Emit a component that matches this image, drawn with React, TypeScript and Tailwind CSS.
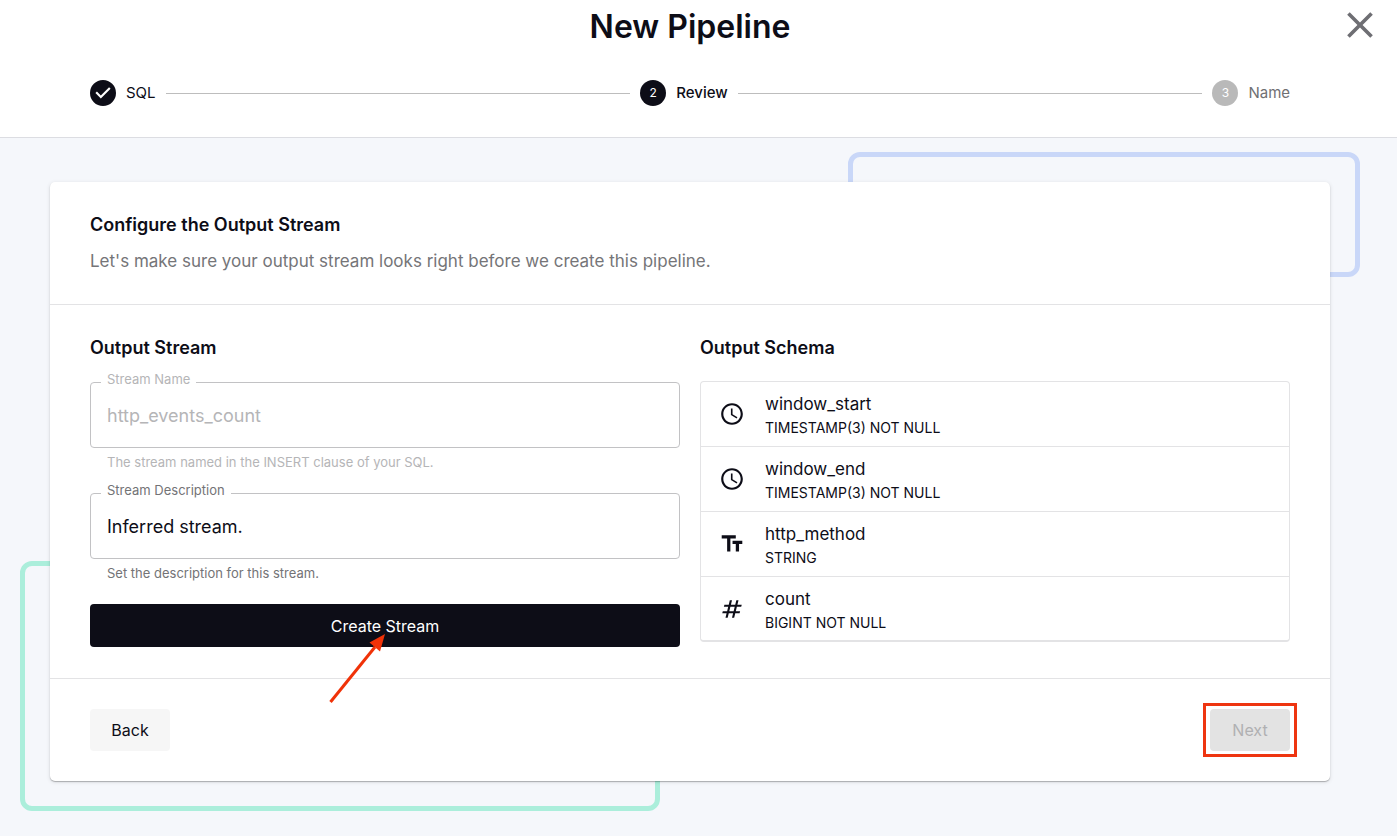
import React from 'react';
import type { IconType } from 'react-icons';
import { MdAccessTime, MdClose, MdNumbers, MdTextFields } from 'react-icons/md';

interface StepProps {
  number: number;
  label: string;
  state: 'done' | 'active' | 'pending';
}

const Step = ({ number, label, state }: StepProps) => {
  const pending = state === 'pending';

  return (
    <li className="flex items-center gap-[10px]" aria-current={state === 'active' ? 'step' : undefined}>
      {state === 'done' ? (
        <svg viewBox="0 0 24 24" className="size-[26px] fill-[#0d0d17]" aria-hidden="true">
          <path d="M12 0a12 12 0 1 0 0 24 12 12 0 0 0 0-24zm-2 17l-5-5 1.4-1.4 3.6 3.6 7.6-7.6L19 8l-9 9z" />
        </svg>
      ) : (
        <span
          className={`flex size-[26px] items-center justify-center rounded-full text-[12px] text-white ${
            pending ? 'bg-[#b9b9b9]' : 'bg-[#0d0d17]'
          }`}
        >
          {number}
        </span>
      )}
      <span
        className={`text-[15px] leading-[22px] ${pending ? 'text-[#707073]' : 'text-[#0d0d17]'} ${
          state === 'active' ? 'font-medium' : ''
        }`}
      >
        {label}
      </span>
    </li>
  );
};

const StepLine = () => <li aria-hidden="true" className="h-px flex-1 bg-[#bdbdbd]" />;

interface FieldProps {
  id: string;
  label: string;
  value: string;
  helper: string;
  disabled?: boolean;
}

const Field = ({ id, label, value, helper, disabled }: FieldProps) => (
  <div className="relative">
    <label
      htmlFor={id}
      className={`absolute -top-[11px] left-[11px] bg-white px-[6px] text-[13px] leading-4 ${
        disabled ? 'text-[#b5b5b7]' : 'text-[#737376]'
      }`}
    >
      {label}
    </label>
    <input
      id={id}
      type="text"
      defaultValue={value}
      disabled={disabled}
      aria-describedby={`${id}-helper`}
      className={`block h-[66px] w-full rounded-[4px] border border-[#c2c2c4] bg-white px-4 text-[18px] outline-none ${
        disabled ? 'text-[#b5b5b7]' : 'text-[#0d0d17]'
      }`}
    />
    <p
      id={`${id}-helper`}
      className={`mt-1 px-[17px] text-[13px] leading-5 ${disabled ? 'text-[#b5b5b7]' : 'text-[#737376]'}`}
    >
      {helper}
    </p>
  </div>
);

interface Column {
  name: string;
  type: string;
  icon: IconType;
}

const columns: Column[] = [
  { name: 'window_start', type: 'TIMESTAMP(3) NOT NULL', icon: MdAccessTime },
  { name: 'window_end', type: 'TIMESTAMP(3) NOT NULL', icon: MdAccessTime },
  { name: 'http_method', type: 'STRING', icon: MdTextFields },
  { name: 'count', type: 'BIGINT NOT NULL', icon: MdNumbers },
];

const SchemaList = () => (
  <ul className="divide-y divide-[#e3e3e5] rounded-[4px] border border-b-2 border-[#e3e3e5]">
    {columns.map(({ name, type, icon: Icon }) => (
      <li key={name} className="flex h-[65px] items-center px-[18px] last:h-[63px]">
        <Icon className="mr-5 size-[26px] shrink-0" />
        <div className="pt-1">
          <p className="text-[17px] leading-6">{name}</p>
          <p className="text-[14px] leading-6">{type}</p>
        </div>
      </li>
    ))}
  </ul>
);

export default function App() {
  return (
    <div className="min-h-screen bg-[#f5f7fb] font-['Inter',sans-serif] text-[#0d0d17]">
      <header className="relative border-b border-[#dcdde2] bg-white pt-2 pr-[107px] pb-[31px] pl-[90px]">
        <h1 className="text-center text-[32px] leading-[38px] font-semibold">New Pipeline</h1>
        <button type="button" aria-label="Close" className="absolute top-[3px] right-[15px] text-[#6e6e73]">
          <MdClose className="size-[44px]" />
        </button>
        <ol className="mt-[34px] flex items-center gap-[10px]">
          <Step number={1} label="SQL" state="done" />
          <StepLine />
          <Step number={2} label="Review" state="active" />
          <StepLine />
          <Step number={3} label="Name" state="pending" />
        </ol>
      </header>

      <main className="pt-11 pr-[67px] pb-[54px] pl-[50px]">
        <div className="relative">
          <div className="absolute -top-[30px] -right-[30px] h-[125px] w-2/5 rounded-xl border-[5px] border-[#c9d7f8]" />
          <div className="absolute -bottom-[30px] -left-[30px] h-[250px] w-1/2 rounded-xl border-[5px] border-[#abeedb]" />

          <div className="relative rounded-[5px] bg-white shadow-[0_1px_1px_rgba(0,0,0,0.25),0_1px_4px_rgba(0,0,0,0.12)]">
            <section className="border-b border-[#e3e3e5] px-10 pt-[31px] pb-[31px]">
              <h2 className="text-[18px] leading-6 font-semibold">Configure the Output Stream</h2>
              <p className="mt-3 text-[17px] leading-6 text-[#757578]">
                Let's make sure your output stream looks right before we create this pipeline.
              </p>
            </section>

            <div className="grid grid-cols-2 gap-5 border-b border-[#e3e3e5] px-10 pt-[31px] pb-[31px]">
              <section>
                <h3 className="text-[18px] leading-6 font-semibold">Output Stream</h3>
                <form className="mt-[22px] flex flex-col gap-[21px]" onSubmit={(e) => e.preventDefault()}>
                  <Field
                    id="stream-name"
                    label="Stream Name"
                    value="http_events_count"
                    helper="The stream named in the INSERT clause of your SQL."
                    disabled
                  />
                  <Field
                    id="stream-description"
                    label="Stream Description"
                    value="Inferred stream."
                    helper="Set the description for this stream."
                  />
                  <div className="relative">
                    <button
                      type="submit"
                      className="h-[43px] w-full rounded-[4px] bg-[#0d0d17] text-[16px] text-white"
                    >
                      Create Stream
                    </button>
                    <svg
                      viewBox="0 0 60 72"
                      className="pointer-events-none absolute top-[29px] right-1/2 h-[72px] w-[60px]"
                      aria-hidden="true"
                    >
                      <path d="M5.5 69 50 14" fill="none" stroke="#f03208" strokeWidth="3" />
                      <path d="M60 1 44.5 9.5 55 18.5z" fill="#f03208" />
                    </svg>
                  </div>
                </form>
              </section>

              <section>
                <h3 className="mb-[21px] text-[18px] leading-6 font-semibold">Output Schema</h3>
                <SchemaList />
              </section>
            </div>

            <footer className="flex items-center justify-between px-10 py-[30px]">
              <button type="button" className="h-[42px] w-20 rounded-[4px] bg-[#f6f6f6] text-[16px]">
                Back
              </button>
              <div className="relative">
                <button
                  type="button"
                  disabled
                  className="block h-[42px] w-20 rounded-[4px] bg-[#e3e3e3] text-[16px] text-[#b0b0b2]"
                >
                  Next
                </button>
                <div className="pointer-events-none absolute -inset-x-[7px] -inset-y-[6px] border-[3px] border-[#ee3510]" />
              </div>
            </footer>
          </div>
        </div>
      </main>
    </div>
  );
}
